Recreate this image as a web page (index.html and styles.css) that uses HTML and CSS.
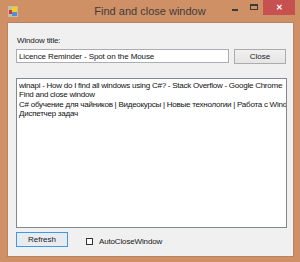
FILE: index.html
```html
<!DOCTYPE html>
<html lang="en">
<head>
    <meta charset="UTF-8">
    <title>Find and close window</title>
    <link rel="stylesheet" href="styles.css">
</head>
<body>
    <div class="window">
        <div class="titlebar">
            <div class="app-icon">
                <svg width="10" height="11" viewBox="0 0 10 11">
                    <rect x="0" y="0" width="10" height="11" fill="#c9b9a8"/>
                    <rect x="4" y="1" width="5" height="5" fill="#f2d21c"/>
                    <rect x="1" y="4" width="3" height="4" fill="#d8333a"/>
                    <rect x="4" y="6" width="5" height="4" fill="#4f8fd8"/>
                </svg>
            </div>
            <div class="title">Find and close window</div>
            <div class="controls">
                <span class="btn-min"></span>
                <span class="btn-max"></span>
                <span class="btn-close">&#x2715;</span>
            </div>
        </div>

        <div class="client">
            <label class="field-label" for="title">Window title:</label>
            <div class="title-row">
                <input type="text" id="title" class="textbox" value="Licence Reminder - Spot on the Mouse">
                <button class="button">Close</button>
            </div>

            <div class="listbox">
                <div class="item">winapi - How do I find all windows using C#? - Stack Overflow - Google Chrome</div>
                <div class="item">Find and close window</div>
                <div class="item">C# обучение для чайников | Видеокурсы | Новые технологии | Работа с Windows Forms</div>
                <div class="item">Диспетчер задач</div>
            </div>

            <div class="bottom-row">
                <button class="button button-focus">Refresh</button>
                <label class="check">
                    <span class="checkbox"></span>
                    AutoCloseWindow
                </label>
            </div>
        </div>
    </div>
</body>
</html>
```

FILE: styles.css
```css
* {
    margin: 0;
    padding: 0;
    box-sizing: border-box;
}

body {
    font-family: 'Liberation Sans', Arial, sans-serif;
    background: #cf9066;
    width: 300px;
    height: 262px;
    overflow: hidden;
}

.window {
    width: 300px;
    height: 262px;
    background: #cf9066;
    display: flex;
    flex-direction: column;
}

.titlebar {
    height: 22px;
    display: grid;
    grid-template-columns: 1fr auto 1fr;
    align-items: start;
}

.app-icon {
    padding: 6px 0 0 8px;
    line-height: 0;
}

.title {
    font-size: 11px;
    color: #3c3c3c;
    padding-top: 5px;
}

.controls {
    display: flex;
    justify-content: flex-end;
    align-items: flex-start;
    padding-right: 5px;
}

.btn-min {
    width: 6px;
    height: 2px;
    background: #3a3a3a;
    margin: 9px 12px 0 0;
}

.btn-max {
    width: 8px;
    height: 6px;
    border: 1px solid #3a3a3a;
    border-top-width: 2px;
    margin: 4px 5px 0 0;
}

.btn-close {
    width: 32px;
    height: 15px;
    background: #c75050;
    color: #fff;
    font-size: 8px;
    font-weight: bold;
    text-align: center;
    line-height: 15px;
}

.client {
    flex: 1;
    margin: 0 6px 5px 7px;
    background: #f0f0f0;
    border: 1px solid #b98260;
    padding: 13px 6px 0 8px;
    display: flex;
    flex-direction: column;
    font-size: 8px;
    letter-spacing: -0.15px;
}

.field-label {
    color: #1a1a1a;
    margin-bottom: 3px;
    margin-left: 1px;
    line-height: 10px;
}

.title-row {
    display: flex;
    gap: 5px;
    align-items: flex-start;
}

.textbox {
    width: 213px;
    height: 14px;
    border: 1px solid #abadb3;
    background: #fff;
    font-family: inherit;
    font-size: 8px;
    letter-spacing: -0.1px;
    color: #111;
    padding: 0 2px;
}

.button {
    width: 52px;
    height: 15px;
    border: 1px solid #acacac;
    background: linear-gradient(#f0f0f0, #e5e5e5);
    font-family: inherit;
    font-size: 8px;
    color: #1a1a1a;
}

.button-focus {
    border-color: #3c9ae8;
    background: #e8ecf0;
}

.listbox {
    margin-top: 14px;
    width: 271px;
    height: 150px;
    border: 1px solid #828790;
    background: #fff;
    padding: 2px 2px;
    overflow: hidden;
}

.item {
    line-height: 9.3px;
    letter-spacing: -0.25px;
    color: #111;
    white-space: nowrap;
}

.bottom-row {
    display: flex;
    align-items: center;
    gap: 18px;
    margin-top: 4px;
}

.check {
    display: flex;
    align-items: center;
    gap: 6px;
    color: #1a1a1a;
    margin-top: 4px;
}

.checkbox {
    width: 7px;
    height: 7px;
    border: 1px solid #333;
    background: #fff;
}
```
